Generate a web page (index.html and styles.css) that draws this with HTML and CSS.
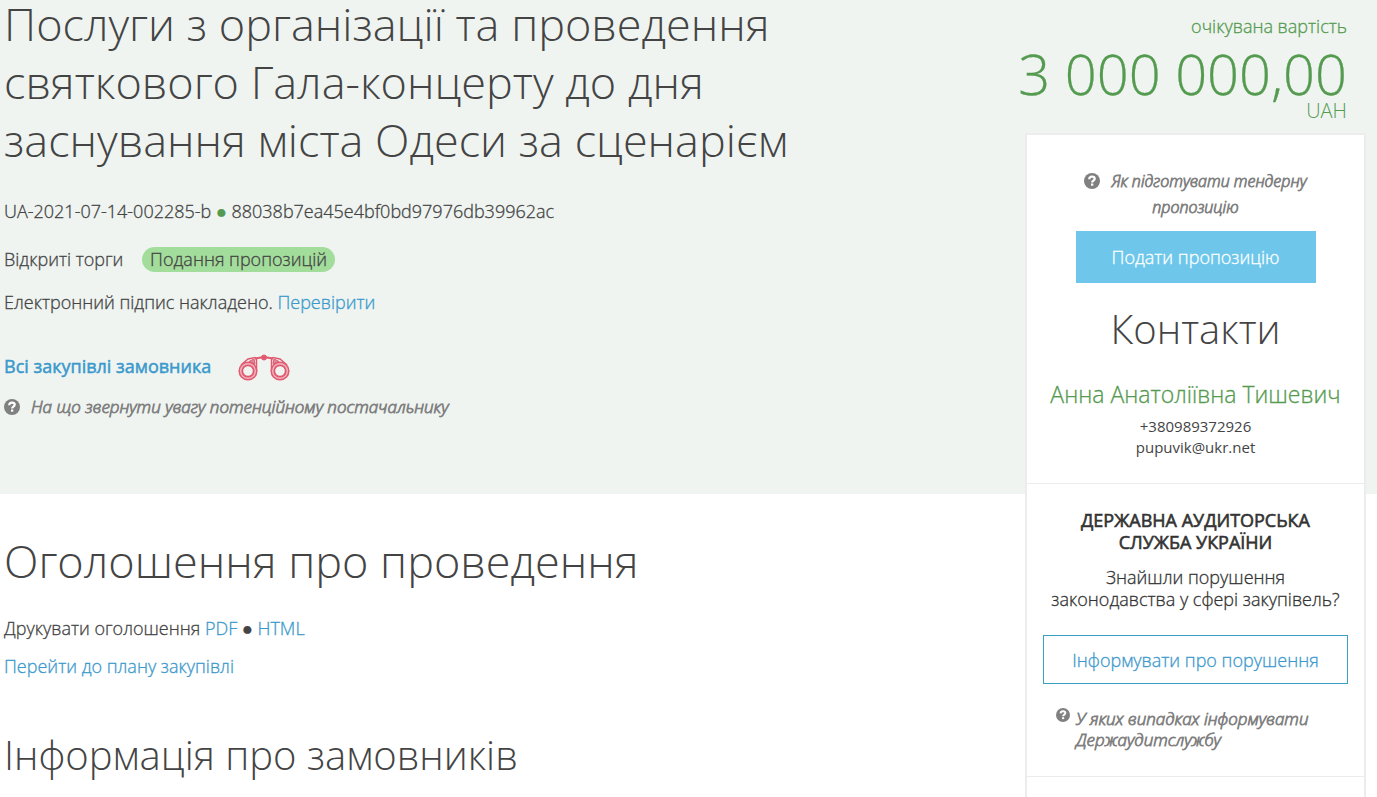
FILE: index.html
```
<!DOCTYPE html>
<html lang="uk">
<head>
	<meta charset="utf-8">
	<meta name="viewport" content="width=device-width, initial-scale=1">
	<title>Послуги з організації та проведення святкового Гала-концерту</title>
	<link rel="stylesheet" href="styles.css">
</head>
<body>
	<svg class="sprite" aria-hidden="true">
		<symbol id="question" viewBox="0 0 16 16">
			<circle cx="8" cy="8" r="8" fill="#808080"/>
			<path d="M5.200 6.200C5.300 4.500 6.400 3.700 8 3.700c1.600 0 2.700.8 2.700 2.100 0 1.800-2.600 1.700-2.600 3.600" fill="none" stroke="#fff" stroke-width="2.200"/>
			<rect x="7" y="10.500" width="2.300" height="2.200" fill="#fff"/>
		</symbol>
	</svg>
	<div class="tender">
		<header class="hero">
			<h1>Послуги з організації та проведення святкового Гала-концерту до дня заснування міста Одеси за сценарієм</h1>
			<p class="ids">UA-2021-07-14-002285-b <span class="dot">●</span> 88038b7ea45e4bf0bd97976db39962ac</p>
			<p class="state">Відкриті торги <span class="status">Подання пропозицій</span></p>
			<p class="sign">Електронний підпис накладено. <a href="#">Перевірити</a></p>
			<p class="all">
				<a href="#">Всі закупівлі замовника</a>
				<svg class="binoculars" viewBox="0 0 52 28" fill="none" stroke="#e05a70">
					<circle cx="10" cy="17" r="7.300" stroke="#f2b3bc" stroke-width="4"/>
					<circle cx="42" cy="17" r="7.300" stroke="#f2b3bc" stroke-width="4"/>
					<circle cx="10" cy="17" r="8.800" stroke-width="1.500"/>
					<circle cx="10" cy="17" r="5.700" stroke-width="1.800"/>
					<circle cx="42" cy="17" r="8.800" stroke-width="1.500"/>
					<circle cx="42" cy="17" r="5.700" stroke-width="1.800"/>
					<path d="M3 11 10 5l7-1.500 1.500 2V16M49 11l-7-6-7-1.500-1.500 2V16" stroke-width="1.500"/>
					<path d="M11 7.500 16 5l1 5zM41 7.500 36 5l-1 5z" fill="#e05a70" fill-opacity=".7"/>
					<path d="M17 4.500 26 3l9 1.500" stroke-width="2"/>
					<circle cx="26" cy="3.500" r="2.500" fill="#e05a70"/>
				</svg>
			</p>
			<a class="hint" href="#"><svg class="icon"><use href="#question"/></svg>На що звернути увагу потенційному постачальнику</a>
		</header>

		<main class="content">
			<h2>Оголошення про проведення</h2>
			<p>Друкувати оголошення <a href="#">PDF</a> ● <a href="#">HTML</a></p>
			<p><a href="#">Перейти до плану закупівлі</a></p>
			<h3>Інформація про замовників</h3>
		</main>

		<aside class="side">
			<div class="cost">
				<div class="label">очікувана вартість</div>
				<div class="price">3 000 000,00</div>
				<div class="currency">UAH</div>
			</div>
			<div class="card">
				<section class="contacts">
					<a class="hint" href="#"><svg class="icon"><use href="#question"/></svg>Як підготувати тендерну пропозицію</a>
					<button class="btn" type="button">Подати пропозицію</button>
					<h3>Контакти</h3>
					<div class="name">Анна Анатоліївна Тишевич</div>
					<div class="small">+380989372926</div>
					<div class="small">pupuvik@ukr.net</div>
				</section>
				<section class="audit">
					<h4>ДЕРЖАВНА АУДИТОРСЬКА СЛУЖБА УКРАЇНИ</h4>
					<p>Знайшли порушення законодавства у сфері закупівель?</p>
					<button class="btn-line" type="button">Інформувати про порушення</button>
					<a class="hint" href="#"><svg class="icon"><use href="#question"/></svg><span>У яких випадках інформувати Держаудитслужбу</span></a>
				</section>
			</div>
		</aside>
	</div>
</body>
</html>
```
FILE: styles.css
```
*{box-sizing:border-box}
body{margin:0;font:300 18px/26px "Open Sans",sans-serif;color:#444;background:#fff}
h1,h2,h3,h4,p{margin:0;font-weight:300}
p,.label,.name,.btn,.btn-line{-webkit-text-stroke:.3px}
a{color:#3b99cc;text-decoration:none}
button{font:inherit;cursor:pointer}
.sprite{display:none}

.tender{display:grid;grid-template-columns:minmax(0,1fr) 341px 11px;grid-template-rows:auto 1fr;min-height:100vh}

.hero{grid-column:1/-1;grid-row:1;background:#eff4f1;padding:0 352px 74px 4px}
.hero h1{max-width:800px;font-size:45px;line-height:58px;margin:-5px 0 29px}
.ids{margin-bottom:22px}
.dot{color:#549a4f}
.state{margin-bottom:17px}
.status{display:inline-block;margin-left:14px;padding:0 8px;line-height:25px;border-radius:13px;background:#a3dd9b}
.sign{margin-bottom:36px}
.all{display:flex;align-items:center;gap:27px;height:30px;margin-bottom:12px}
.all a{font-weight:400;-webkit-text-stroke:.5px}
.binoculars{width:52px;height:28px;margin-top:4px}

.hint{color:#808080;font-size:17px;font-weight:300;font-style:italic;-webkit-text-stroke:.8px}
.icon{width:16px;height:16px;margin-right:11px;vertical-align:-2px}

.content{grid-column:1;grid-row:2;padding:37px 4px 0}
.content h2{font-size:45px;line-height:60px;margin-bottom:24px}
.content p{margin-bottom:12px}
.content h3{margin-top:50px}
h3{font-size:40px;line-height:52px}

.side{grid-column:2;grid-row:1/3;display:flex;flex-direction:column}
.cost{padding:13px 19px 0 0;color:#549a4f;text-align:right;white-space:nowrap}
.price{margin:9px 0 0 -20px;font-size:56px;line-height:50px;-webkit-text-stroke:.3px}
.currency{margin-top:2px;font-size:20px;line-height:22px}
.card{flex:1;margin-top:11px;border:2px solid #ececec;border-bottom:0;background:#fff;text-align:center}
.contacts{padding:33px 16px 25px;border-bottom:1px solid #ececec}
.contacts .hint{display:block;padding:0 20px;font-size:16px}
.btn{width:240px;height:52px;margin-top:11px;border:0;background:#6ec7eb;color:#fff}
.contacts h3{margin-top:20px}
.name{margin:23px -10px 6px;font-size:23px;line-height:32px;color:#549a4f}
.small{font-size:15px;line-height:21px;font-weight:400}
.audit{padding:25px 16px 26px;border-bottom:1px solid #ececec;color:#333;line-height:22px}
.audit h4{padding:0 20px;font-weight:400;-webkit-text-stroke:.6px;margin-bottom:13px}
.btn-line{width:100%;height:49px;margin:25px 0 24px;border:1px solid #3a9fc2;background:#fff;color:#3b99cc}
.audit .hint{display:flex;gap:6px;padding-left:13px;text-align:left;line-height:21px}
.audit .icon{flex:none;width:14px;height:14px;margin:0}
```
